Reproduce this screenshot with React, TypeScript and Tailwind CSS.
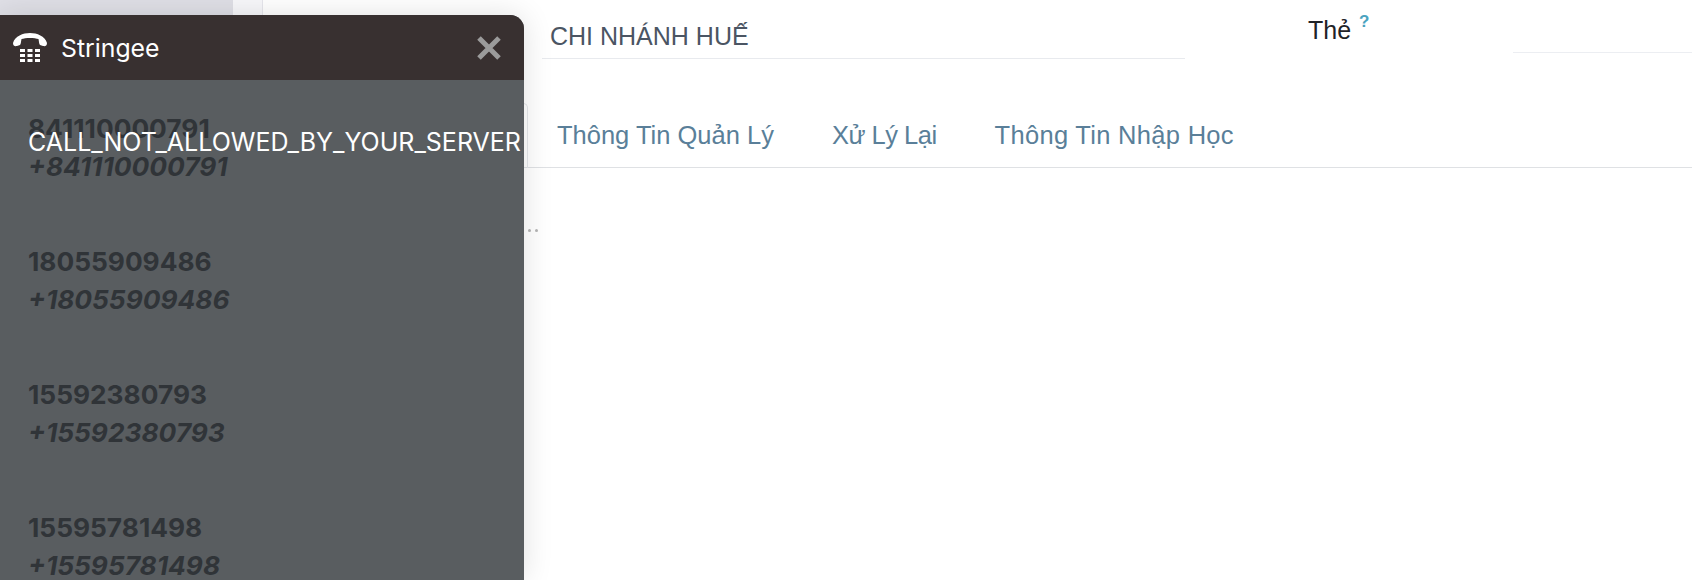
const calls = [
  { number: '841110000791', top: 'mt-[34px]' },
  { number: '18055909486', top: 'mt-[66px]' },
  { number: '15592380793', top: 'mt-[66px]' },
  { number: '15595781498', top: 'mt-[66px]' },
];

function PhoneIcon() {
  return (
    <svg width="34" height="30" viewBox="0 0 34 30" fill="#ffffff" className="shrink-0">
      <path d="M0 10C2 3 10 0 17 0C24 0 32 3 34 10C34 13 32 13.5 30 13L27 12C26 11 26 8 25.5 6C22 4.5 12 4.5 8.5 6C8 8 8 11 7 12L4 13C2 13.5 0 13 0 10Z" />
      <rect x="7" y="16" width="5" height="3" />
      <rect x="14.5" y="16" width="5" height="3" />
      <rect x="22" y="16" width="5" height="3" />
      <rect x="7" y="21" width="5" height="3" />
      <rect x="14.5" y="21" width="5" height="3" />
      <rect x="22" y="21" width="5" height="3" />
      <rect x="7" y="26" width="5" height="3" />
      <rect x="14.5" y="26" width="5" height="3" />
      <rect x="22" y="26" width="5" height="3" />
    </svg>
  );
}

function StringeePanel() {
  return (
    <div className="absolute left-0 top-[15px] z-10 w-[524px] h-[565px] rounded-tr-[14px] overflow-hidden bg-[#595d60] shadow-[0_0_30px_rgba(0,0,0,0.12)] font-['Inter',sans-serif]">
      <div className="flex items-center h-[65px] bg-[#383030] pl-[13px] pr-[23px]">
        <PhoneIcon />
        <span className="ml-[14px] mt-[2px] text-[24.8px] text-white">Stringee</span>
        <svg width="24" height="24" viewBox="0 0 24 24" className="ml-auto" stroke="#9b9b9b" strokeWidth="5">
          <path d="M2 2L22 22M22 2L2 22" />
        </svg>
      </div>
      <div className="relative px-[28px]">
        {calls.map((call) => (
          <div key={call.number} className={call.top}>
            <div className="text-[26.3px] leading-[29px] font-bold text-[#303438]">{call.number}</div>
            <div className="mt-[9px] text-[26.3px] leading-[29px] font-bold italic text-[#303438]">+{call.number}</div>
          </div>
        ))}
        <div className="absolute left-[28px] top-[14px] text-[25px] leading-[29px] text-white whitespace-nowrap">
          CALL_NOT_ALLOWED_BY_YOUR_SERVER
        </div>
      </div>
    </div>
  );
}

export default function App() {
  return (
    <div className="relative flex h-[580px] overflow-hidden bg-white font-['Liberation_Sans',sans-serif]">
      <StringeePanel />
      <div className="w-[233px] shrink-0 bg-[#dfdfe6]" />
      <div className="w-[30px] shrink-0 bg-[#f7f7fa] border-r border-[#e6e6ec]" />
      <main className="flex-1 min-w-0">
        <div className="flex h-[103px]">
          <div className="ml-[279px] w-[643px] h-[59px] border-b border-[#e8eaee] pl-[8px] pt-[19px]">
            <span className="text-[25px] leading-[34px] text-[#4b5563]">CHI NHÁNH HUẾ</span>
          </div>
          <div className="ml-[123px] flex items-start pt-[13px] text-[#1f2328]">
            <span className="text-[25px] leading-[34px]">Thẻ</span>
            <sup className="ml-[8px] mt-[17px] text-[17px] font-bold text-[#4aa3bf]">?</sup>
          </div>
          <div className="ml-auto w-[179px] h-[53px] border-b border-[#eceef2]" />
        </div>
        <div className="ml-[260px] h-[65px] border-b border-[#dfe1e4] flex">
          <div className="w-[5px] h-[65px] border-r border-t border-[#e4e6e9] rounded-tr-[5px]" />
          <nav className="flex items-center gap-[58px] pl-[29px] text-[25.5px] text-[#5a7f99]">
            <span>Thông Tin Quản Lý</span>
            <span className="tracking-[-0.5px]">Xử Lý Lại</span>
            <span className="tracking-[0.3px]">Thông Tin Nhập Học</span>
          </nav>
        </div>
        <div className="ml-[258px] mt-[61px] flex gap-[4px]">
          <span className="size-[3px] rounded-full bg-[#b5b5b5]" />
          <span className="size-[3px] rounded-full bg-[#b5b5b5]" />
          <span className="size-[3px] rounded-full bg-[#b5b5b5]" />
        </div>
      </main>
    </div>
  );
}
